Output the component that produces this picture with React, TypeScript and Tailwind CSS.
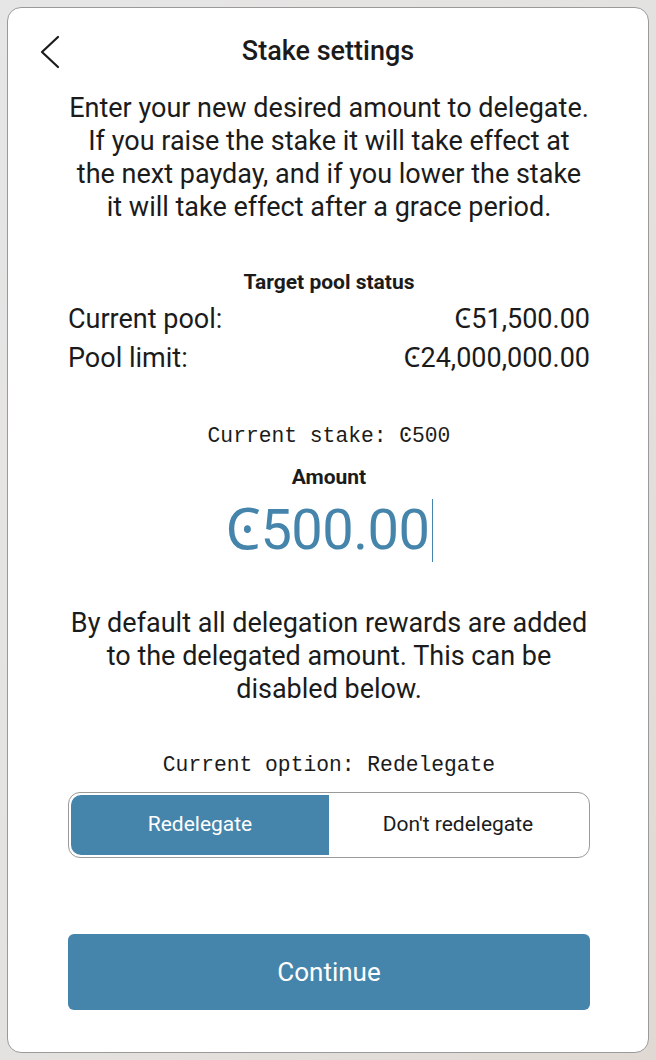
import React from "react";

export default function App() {
  const blue = "bg-[#4585ab]";
  return (
    <div
      className="w-[656px] h-[1060px] overflow-hidden bg-gradient-to-br from-[#e6e6e6] via-[#e4e2e0] to-[#e0d9d3] pt-[7px] px-[7px]"
      style={{ fontFamily: "Roboto, 'Noto Sans', sans-serif" }}
    >
      <div className="h-[1046px] bg-white border border-[#9a9a9a] rounded-[14px] flex flex-col text-[#1b1b1b]">
        {/* header */}
        <div className="relative mt-[15px] h-[56px] flex items-center justify-center">
          <svg
            className="absolute left-[31px] top-[12px]"
            width="22"
            height="34"
            viewBox="0 0 22 34"
            fill="none"
          >
            <path d="M19 2 L3 17 L19 32" stroke="#1b1b1b" strokeWidth="2.2" strokeLinecap="round" strokeLinejoin="round" />
          </svg>
          <h1 className="text-[27px] leading-[34px] font-medium">Stake settings</h1>
        </div>

        <div className="pl-[60px] pr-[58px] flex flex-col">
          <p className="mt-[13px] text-[27px] leading-[33px] text-center">
            Enter your new desired amount to delegate. If you raise the stake it will take effect at the next payday, and if you lower the stake it will take effect after a grace period.
          </p>

          <div className="mt-[46px] text-[21px] leading-[24px] font-bold text-center">Target pool status</div>
          <div className="mt-[6px] flex flex-col text-[27px]">
            <div className="h-[39px] flex items-center justify-between">
              <span>Current pool:</span>
              <span>Ͼ51,500.00</span>
            </div>
            <div className="h-[39px] flex items-center justify-between">
              <span>Pool limit:</span>
              <span>Ͼ24,000,000.00</span>
            </div>
          </div>

          <div
            className="mt-[45px] h-[28px] flex items-center justify-center text-[21.3px]"
            style={{ fontFamily: "'Liberation Mono', 'DejaVu Sans Mono', monospace" }}
          >
            Current stake: Ͼ500
          </div>
          <div className="mt-[14px] text-[21px] leading-[24px] font-bold text-center">Amount</div>
          <div className="mt-[9px] h-[64px] flex items-center justify-center">
            <span className="text-[56px] leading-[64px] text-[#4585ab] tracking-[-0.5px]">Ͼ500.00</span>
            <span className="ml-[2px] w-px h-[63px] bg-[#4585ab]" />
          </div>

          <p className="mt-[45px] text-[27px] leading-[33px] text-center">
            By default all delegation rewards are added to the delegated amount. This can be disabled below.
          </p>

          <div
            className="mt-[46px] h-[28px] flex items-center justify-center text-[21.3px]"
            style={{ fontFamily: "'Liberation Mono', 'DejaVu Sans Mono', monospace" }}
          >
            Current option: Redelegate
          </div>

          <div className="mt-[12px] h-[66px] p-[2px] border border-[#9a9a9a] rounded-[12px] flex text-[21px]">
            <div className={`flex-1 ${blue} rounded-l-[10px] flex items-center justify-center text-white`}>Redelegate</div>
            <div className="flex-1 flex items-center justify-center">Don't redelegate</div>
          </div>

          <button className={`mt-[76px] h-[76px] ${blue} rounded-[6px] text-white text-[26px]`}>Continue</button>
        </div>
      </div>
    </div>
  );
}
